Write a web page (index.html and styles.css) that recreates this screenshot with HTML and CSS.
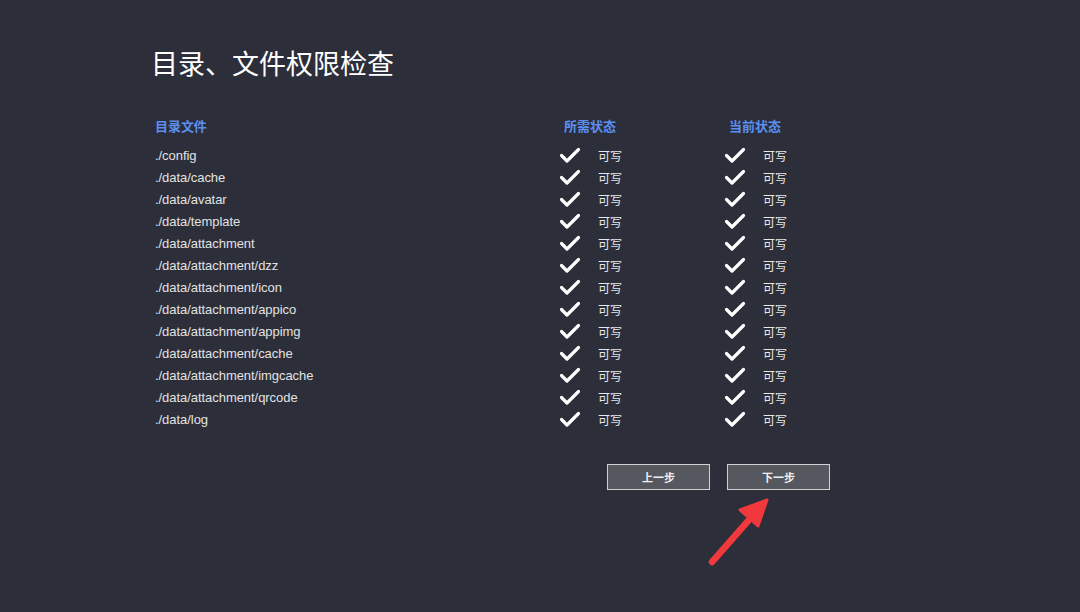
FILE: index.html
```html
<!DOCTYPE html>
<html lang="zh">
<head>
<meta charset="utf-8">
<link rel="stylesheet" href="styles.css">
</head>
<body>
<main class="page">
  <h1 class="title">目录、文件权限检查</h1>
  <div class="table">
    <div class="row head">
      <div class="c-path">目录文件</div>
      <div class="c-st"><span class="hd">所需状态</span></div>
      <div class="c-st"><span class="hd">当前状态</span></div>
    </div>
  </div>
  <div class="table" id="rows"></div>
  <div class="actions">
    <button class="btn">上一步</button>
    <button class="btn">下一步</button>
  </div>
</main>
<svg class="arrow" width="80" height="80" viewBox="0 0 80 80">
  <line x1="8" y1="68" x2="44" y2="27" stroke="#f1393d" stroke-width="6.5" stroke-linecap="round"/>
  <polygon points="63,6 36,16 54,32" fill="#f1393d" stroke="#f1393d" stroke-width="3" stroke-linejoin="round"/>
</svg>
<script src="app.js"></script>
</body>
</html>
```
FILE: app.js
```js
var paths = ["./config","./data/cache","./data/avatar","./data/template","./data/attachment","./data/attachment/dzz","./data/attachment/icon","./data/attachment/appico","./data/attachment/appimg","./data/attachment/cache","./data/attachment/imgcache","./data/attachment/qrcode","./data/log"];
var check = '<svg class="ck" width="22" height="17" viewBox="0 0 22 17"><path d="M2.5 8.5 L8 14 L19.5 2.5" fill="none" stroke="#fff" stroke-width="3.2" stroke-linecap="round" stroke-linejoin="round"/></svg>';
var html = "";
paths.forEach(function (p) {
  html += '<div class="row"><div class="c-path">' + p + '</div>' +
    '<div class="c-st">' + check + '<span class="w">可写</span></div>' +
    '<div class="c-st">' + check + '<span class="w">可写</span></div></div>';
});
document.getElementById("rows").innerHTML = html;
```
FILE: styles.css
```css
html, body { margin: 0; padding: 0; }
body {
  background: #2c2e3a;
  width: 1080px;
  height: 612px;
  overflow: hidden;
  font-family: "Liberation Sans", Arial, "Noto Sans CJK SC", sans-serif;
  color: #e2e2e2;
  position: relative;
}
.page {
  padding: 44px 0 0 151px;
}
.title {
  margin: 0;
  font-size: 27px;
  font-weight: normal;
  color: #fff;
  line-height: 38px;
  font-family: "Noto Sans CJK SC", sans-serif;
}
.table { display: flex; flex-direction: column; margin-left: 1px; }
.row {
  display: grid;
  grid-template-columns: 408px 165px 165px;
  height: 22px;
  align-items: center;
  font-size: 13px;
}
.row.head {
  margin-top: 31px;
  height: 24px;
  margin-bottom: 7px;
}
.head .c-path, .head .hd {
  color: #5b8ff0;
  font-weight: bold;
  font-family: "Noto Sans CJK SC", sans-serif;
  font-size: 13px;
}
.c-path { padding-left: 3px; letter-spacing: -0.05px; }
.c-st { display: flex; align-items: center; }
.hd { padding-left: 4px; }
.ck { display: block; margin-left: -1px; }
.w {
  margin-left: 17px;
  font-size: 12px;
  font-family: "Noto Sans CJK SC", sans-serif;
  color: #e8e8e8;
}
.actions {
  display: flex;
  gap: 17px;
  margin: 34px 0 0 456px;
}
.btn {
  box-sizing: border-box;
  width: 103px;
  height: 26px;
  background: #56585f;
  border: 1px solid #d0d0d0;
  color: #f0f0f0;
  font-size: 11px;
  font-weight: bold;
  font-family: "Noto Sans CJK SC", sans-serif;
  padding: 0;
}
.arrow {
  position: absolute;
  left: 704px;
  top: 494px;
}
```
